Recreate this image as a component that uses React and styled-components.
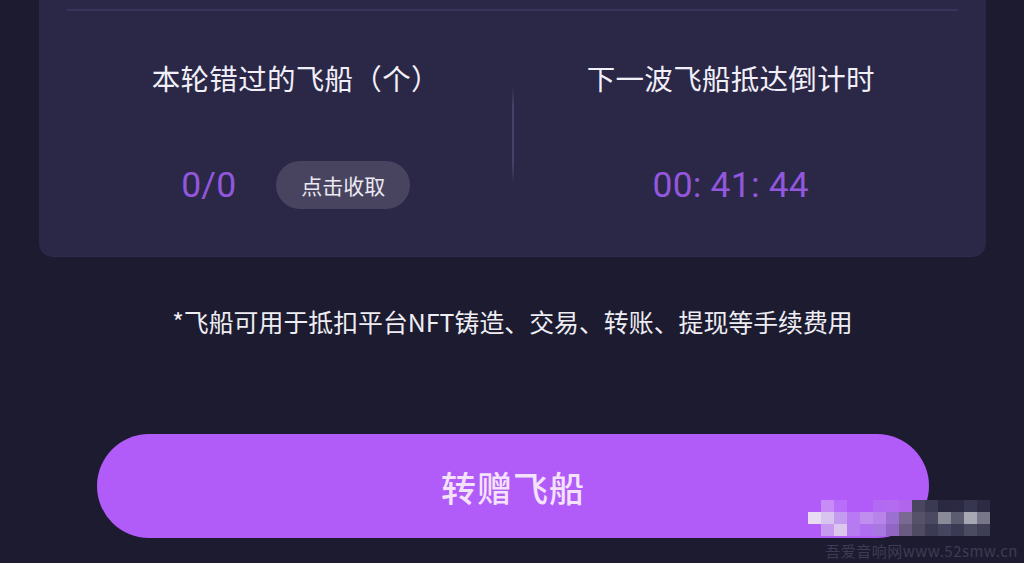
import React from "react";
import styled, { createGlobalStyle } from "styled-components";

const GlobalStyle = createGlobalStyle`
  html, body {
    margin: 0;
    padding: 0;
    background: #1c1b30;
  }
  body {
    font-family: "Noto Sans CJK SC", "Noto Sans", sans-serif;
    -webkit-font-smoothing: antialiased;
  }
`;

const Page = styled.div`
  position: relative;
  width: 1024px;
  height: 563px;
  overflow: hidden;
  padding: 0 38px 0 39px;
  box-sizing: border-box;
  display: flex;
  flex-direction: column;
`;

const Card = styled.div`
  background: #2a2747;
  border-radius: 0 0 14px 14px;
  padding: 9px 28px 48px;
  box-shadow: inset 0 -1px 0 rgba(255, 255, 255, 0.03);
`;

const TopRule = styled.div`
  height: 2px;
  background: #38355a;
`;

const Stats = styled.div`
  display: grid;
  grid-template-columns: 1fr 2px 1fr;
  margin-top: 49px;
`;

const Column = styled.div`
  display: flex;
  flex-direction: column;
  align-items: center;
  padding-left: ${(p) => (p.$side === "left" ? "13px" : "0")};
  padding-right: ${(p) => (p.$side === "right" ? "10px" : "0")};
`;

const Title = styled.div`
  font-size: 28.5px;
  line-height: 36px;
  color: #f1eff7;
  letter-spacing: 0.3px;
`;

const ValueRow = styled.div`
  display: flex;
  align-items: center;
  gap: 40px;
  height: 48px;
  margin-top: 65px;
`;

const Value = styled.span`
  font-family: Roboto, "Noto Sans", sans-serif;
  font-size: 35.5px;
  line-height: 48px;
  color: #9257dc;
  letter-spacing: 0.2px;
`;

const CollectButton = styled.button`
  width: 134px;
  height: 48px;
  border: none;
  border-radius: 24px;
  background: #48445f;
  color: #ebe9f1;
  font-family: "Noto Sans CJK SC", sans-serif;
  font-size: 21px;
  padding: 0;
`;

const VDivider = styled.div`
  align-self: center;
  height: 96px;
  width: 2px;
  background: linear-gradient(
    to bottom,
    rgba(70, 67, 106, 0),
    #45426a 20%,
    #45426a 80%,
    rgba(70, 67, 106, 0)
  );
`;

const Note = styled.p`
  margin: 48px 0 0;
  text-align: center;
  font-size: 24.9px;
  line-height: 32px;
  color: #eeedf3;
`;

const GiftButton = styled.button`
  margin: 97px 57px 0 58px;
  height: 104px;
  border: none;
  border-radius: 52px;
  background: #b15cf8;
  color: #f4e2fa;
  font-family: "Noto Sans CJK SC", sans-serif;
  font-size: 35px;
  font-weight: 500;
  letter-spacing: 1px;
`;

const Mosaic = styled.div`
  position: absolute;
  left: 808px;
  top: 500px;
  display: grid;
  grid-template-columns: repeat(14, 13px);
  grid-auto-rows: 12px;
`;

const Tile = styled.div`
  background: ${(p) => p.$c};
`;

const Watermark = styled.div`
  position: absolute;
  right: 6px;
  bottom: 2px;
  font-family: "Noto Sans CJK SC", sans-serif;
  font-size: 15px;
  color: #3d3c55;
  letter-spacing: 0.5px;
`;

const mosaic = [
  ["#b15cf8", "#c88cf6", "#b86ef8", "#b15cf8", "#b15cf8", "#b26af2", "#b36cf0", "#b165ec", "#4a4660", "#3a3a52", "#2a2940", "#2b2a42", "#363650", "#2c2b43"],
  ["#e8dcf2", "#d9c4f0", "#c39bef", "#b87af2", "#c08eee", "#b884ec", "#9c6fd2", "#7a6a92", "#55526a", "#4a4960", "#8a8a98", "#5c5c70", "#a8a8b4", "#777789"],
  ["#b15cf8", "#c79af0", "#dcc6ee", "#b47cef", "#b06ef0", "#a878e0", "#9264c4", "#6a5c80", "#4e4b63", "#3c3b54", "#464560", "#3a3a52", "#4b4b62", "#3e3e55"],
];

export default function App() {
  return (
    <>
      <GlobalStyle />
      <Page>
        <Card>
          <TopRule />
          <Stats>
            <Column $side="left">
              <Title>本轮错过的飞船（个）</Title>
              <ValueRow>
                <Value>0/0</Value>
                <CollectButton>点击收取</CollectButton>
              </ValueRow>
            </Column>
            <VDivider />
            <Column $side="right">
              <Title>下一波飞船抵达倒计时</Title>
              <ValueRow>
                <Value>00: 41: 44</Value>
              </ValueRow>
            </Column>
          </Stats>
        </Card>
        <Note>*飞船可用于抵扣平台NFT铸造、交易、转账、提现等手续费用</Note>
        <GiftButton>转赠飞船</GiftButton>
        <Mosaic>
          {mosaic.flat().map((c, i) => (
            <Tile key={i} $c={c} />
          ))}
        </Mosaic>
        <Watermark>吾爱音响网www.52smw.cn</Watermark>
      </Page>
    </>
  );
}
